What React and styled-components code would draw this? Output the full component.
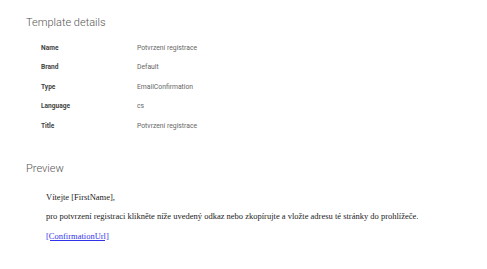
import styled, { createGlobalStyle } from 'styled-components'

const Global = createGlobalStyle`
	body {
		margin: 0;
		background: #fff;
		font-family: Roboto, 'Liberation Sans', sans-serif;
	}
`

const Page = styled.div`
	padding: 15px 26px 0;
`

const Heading = styled.h2`
	margin: 0;
	font-weight: 300;
	font-size: 11px;
	line-height: 16px;
	color: #555;
`

const Details = styled.div`
	display: grid;
	grid-template-columns: 96px 1fr;
	grid-auto-rows: 19.5px;
	align-items: center;
	padding: 7px 0 0 15px;
	margin-bottom: 25px;
`

const Label = styled.div`
	font-size: 6.6px;
	font-weight: 700;
	color: #444;
`

const Value = styled.div`
	font-size: 6.8px;
	color: #666;
`

const Preview = styled.div`
	padding: 16px 0 0 20px;
	font-family: 'Liberation Serif', 'Times New Roman', serif;
	font-size: 8.5px;
	color: #222;

	p {
		margin: 0 0 10.5px;
		line-height: 9px;
	}

	a {
		color: #3333ee;
	}
`

const rows = [
	['Name', 'Potvrzení registrace'],
	['Brand', 'Default'],
	['Type', 'EmailConfirmation'],
	['Language', 'cs'],
	['Title', 'Potvrzení registrace'],
]

export default function App() {
	return (
		<Page>
			<Global />
			<Heading>Template details</Heading>
			<Details>
				{rows.map(([label, value]) => [
					<Label key={label}>{label}</Label>,
					<Value key={label + '-v'}>{value}</Value>,
				])}
			</Details>
			<Heading>Preview</Heading>
			<Preview>
				<p>Vítejte [FirstName],</p>
				<p>
					pro potvrzení registraci klikněte níže uvedený odkaz nebo zkopírujte a vložte
					adresu té stránky do prohlížeče.
				</p>
				<p>
					<a href='#'>[ConfirmationUrl]</a>
				</p>
			</Preview>
		</Page>
	)
}
